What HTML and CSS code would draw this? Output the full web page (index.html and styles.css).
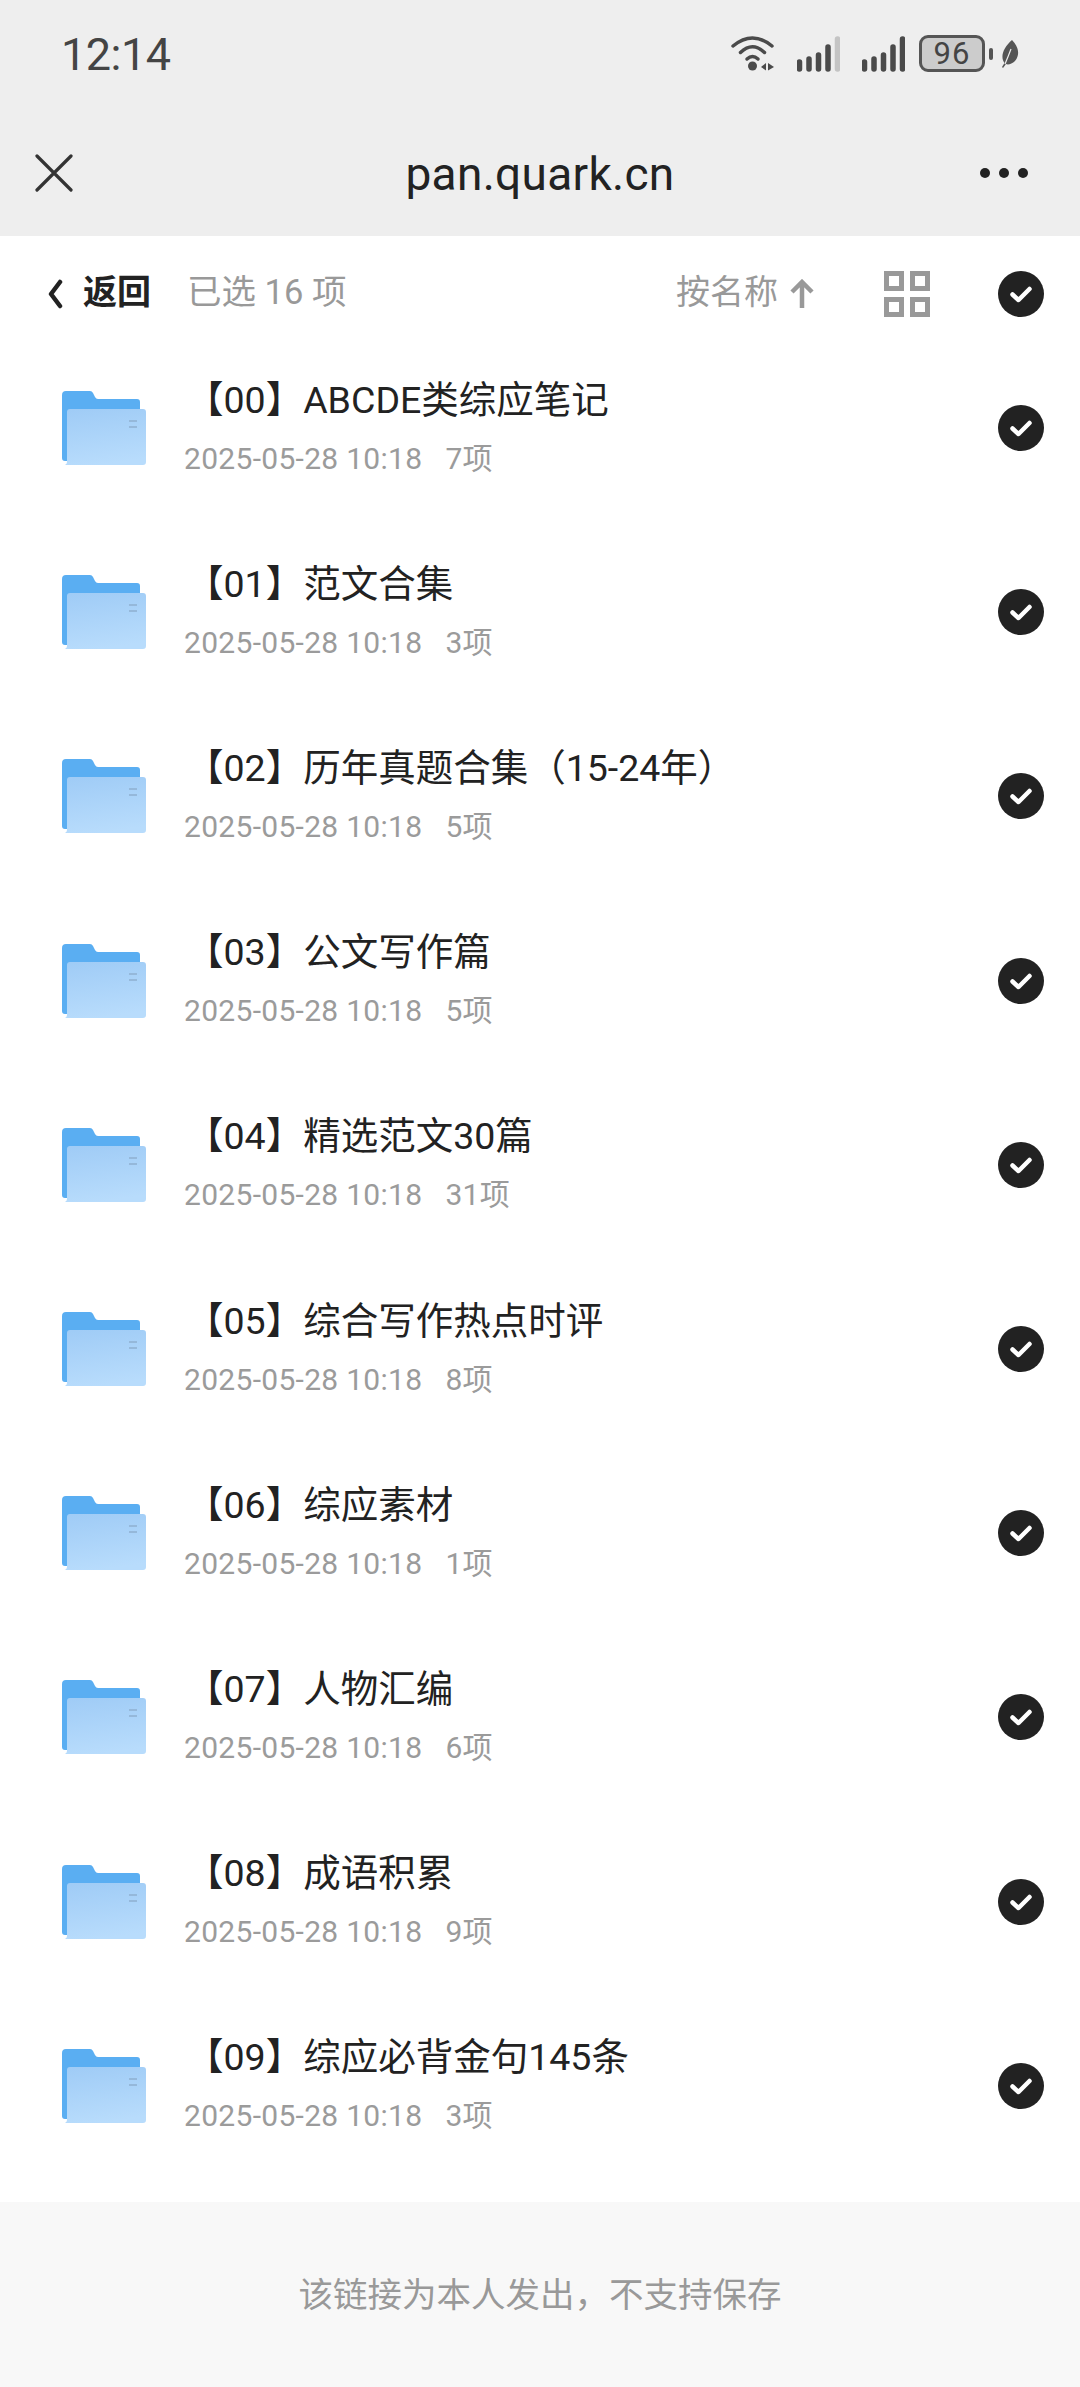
FILE: index.html
```html
<!DOCTYPE html>
<html lang="zh-CN">
<head>
    <meta charset="UTF-8">
    <meta name="viewport" content="width=device-width, initial-scale=1.0">
    <title>pan.quark.cn</title>
    <link rel="stylesheet" href="styles.css">
</head>
<body>
    <svg class="defs" width="0" height="0">
        <defs>
            <linearGradient id="folderfront" x1="0.2" y1="0" x2="0.4" y2="1">
                <stop offset="0" stop-color="#a0ccf6"/>
                <stop offset="1" stop-color="#b8dcfc"/>
            </linearGradient>
        </defs>
        <symbol id="folder" viewBox="0 0 84 74">
            <path d="M0 4q0-4 4-4h24q2 0 3 2l2 4q1 2 3 2h39q3 0 3 3v59H3q-3 0-3-3z" fill="#5aaef2"/>
            <path d="M5 21q0-3 3-3h73q3 0 3 3v50q0 3-3 3H3q2-1 2-3z" fill="url(#folderfront)"/>
            <path d="M67 30h8M67 36h8" stroke="#8fb0d0" stroke-width="1.500"/>
        </symbol>
        <symbol id="check" viewBox="0 0 46 46">
            <circle cx="23" cy="23" r="23" fill="#222"/>
            <path d="M14.500 23.500l6 5.500 11-11" fill="none" stroke="#fff" stroke-width="4.500" stroke-linecap="round" stroke-linejoin="round"/>
        </symbol>
    </svg>

    <div class="top">
        <div class="status">
            <span class="time">12:14</span>
            <div class="status-icons">
                <svg class="wifi" width="44" height="35" viewBox="0 0 44 35">
                    <g fill="none" stroke="#4a4a4a" stroke-width="3.500" stroke-linecap="round">
                        <path d="M2 10Q21.500-6 41 10"/>
                        <path d="M9.500 16.500Q21.500 5 33.500 16.500"/>
                        <path d="M16 23Q21.500 18 27 23"/>
                    </g>
                    <circle cx="21.500" cy="30" r="4.500" fill="#4a4a4a"/>
                    <path d="M30 31l5-4v7.500zM37 27l6 4-6 3.500z" fill="#4a4a4a"/>
                </svg>
                <svg class="signal" width="43" height="36" viewBox="0 0 43 36">
                    <path d="M2.500 26v7M12 23v10M21.500 19v14M31 11v22" fill="none" stroke="#4a4a4a" stroke-width="5.500" stroke-linecap="round"/>
                    <path d="M40.500 3v30" fill="none" stroke="#c4c4c4" stroke-width="5.500" stroke-linecap="round"/>
                </svg>
                <svg class="signal" width="43" height="36" viewBox="0 0 43 36">
                    <path d="M2.500 26v7M12 23v10M21.500 19v14M31 11v22M40.500 3v30" fill="none" stroke="#4a4a4a" stroke-width="5.500" stroke-linecap="round"/>
                </svg>
                <div class="battery"><span class="battery-num">96</span></div>
                <span class="battery-tip"></span>
                <svg class="leaf" width="19" height="28" viewBox="0 0 19 28">
                    <path d="M12 0C19 7 20 15 15 21 12 24 8 25 6 24L3 28 2 27 4.500 23C0 17 3 8 12 0z" fill="#555"/>
                    <path d="M5 24Q8 17 11 9" fill="none" stroke="#eee" stroke-width="1.200"/>
                </svg>
            </div>
        </div>
        <div class="nav">
            <svg class="close" width="38" height="38" viewBox="0 0 38 38"><path d="M2 2l34 34M36 2L2 36" fill="none" stroke="#333" stroke-width="3.200" stroke-linecap="round"/></svg>
            <span class="nav-title">pan.quark.cn</span>
            <div class="dots"><i></i><i></i><i></i></div>
        </div>
    </div>

    <div class="toolbar">
        <svg class="back" width="16" height="30" viewBox="0 0 16 30"><path d="M13 3L4 15l9 12" fill="none" stroke="#222" stroke-width="4.500" stroke-linecap="round" stroke-linejoin="round"/></svg>
        <span class="back-text">返回</span>
        <span class="count">已选 16 项</span>
        <span class="sort">按名称</span>
        <svg class="arrow" width="26" height="30" viewBox="0 0 26 30"><path d="M13 29V4M3 13L13 3l10 10" fill="none" stroke="#999" stroke-width="4.500"/></svg>
        <div class="grid-icon"><i></i><i></i><i></i><i></i></div>
        <svg class="check" width="46" height="46"><use href="#check"/></svg>
    </div>

    <ul class="list">
        <li class="row">
            <svg class="folder" width="84" height="74"><use href="#folder"/></svg>
            <div class="info"><div class="name">【00】ABCDE类综应笔记</div><div class="meta"><span>2025-05-28 10:18</span><span>7项</span></div></div>
            <svg class="check" width="46" height="46"><use href="#check"/></svg>
        </li>
        <li class="row">
            <svg class="folder" width="84" height="74"><use href="#folder"/></svg>
            <div class="info"><div class="name">【01】范文合集</div><div class="meta"><span>2025-05-28 10:18</span><span>3项</span></div></div>
            <svg class="check" width="46" height="46"><use href="#check"/></svg>
        </li>
        <li class="row">
            <svg class="folder" width="84" height="74"><use href="#folder"/></svg>
            <div class="info"><div class="name">【02】历年真题合集（15-24年）</div><div class="meta"><span>2025-05-28 10:18</span><span>5项</span></div></div>
            <svg class="check" width="46" height="46"><use href="#check"/></svg>
        </li>
        <li class="row">
            <svg class="folder" width="84" height="74"><use href="#folder"/></svg>
            <div class="info"><div class="name">【03】公文写作篇</div><div class="meta"><span>2025-05-28 10:18</span><span>5项</span></div></div>
            <svg class="check" width="46" height="46"><use href="#check"/></svg>
        </li>
        <li class="row">
            <svg class="folder" width="84" height="74"><use href="#folder"/></svg>
            <div class="info"><div class="name">【04】精选范文30篇</div><div class="meta"><span>2025-05-28 10:18</span><span>31项</span></div></div>
            <svg class="check" width="46" height="46"><use href="#check"/></svg>
        </li>
        <li class="row">
            <svg class="folder" width="84" height="74"><use href="#folder"/></svg>
            <div class="info"><div class="name">【05】综合写作热点时评</div><div class="meta"><span>2025-05-28 10:18</span><span>8项</span></div></div>
            <svg class="check" width="46" height="46"><use href="#check"/></svg>
        </li>
        <li class="row">
            <svg class="folder" width="84" height="74"><use href="#folder"/></svg>
            <div class="info"><div class="name">【06】综应素材</div><div class="meta"><span>2025-05-28 10:18</span><span>1项</span></div></div>
            <svg class="check" width="46" height="46"><use href="#check"/></svg>
        </li>
        <li class="row">
            <svg class="folder" width="84" height="74"><use href="#folder"/></svg>
            <div class="info"><div class="name">【07】人物汇编</div><div class="meta"><span>2025-05-28 10:18</span><span>6项</span></div></div>
            <svg class="check" width="46" height="46"><use href="#check"/></svg>
        </li>
        <li class="row">
            <svg class="folder" width="84" height="74"><use href="#folder"/></svg>
            <div class="info"><div class="name">【08】成语积累</div><div class="meta"><span>2025-05-28 10:18</span><span>9项</span></div></div>
            <svg class="check" width="46" height="46"><use href="#check"/></svg>
        </li>
        <li class="row">
            <svg class="folder" width="84" height="74"><use href="#folder"/></svg>
            <div class="info"><div class="name">【09】综应必背金句145条</div><div class="meta"><span>2025-05-28 10:18</span><span>3项</span></div></div>
            <svg class="check" width="46" height="46"><use href="#check"/></svg>
        </li>
    </ul>

    <div class="footer">该链接为本人发出，不支持保存</div>
</body>
</html>
```
FILE: styles.css
```css
* {
    box-sizing: border-box;
}
html, body {
    height: 100%;
}
body {
    margin: 0;
    background-color: #fff;
    color: #222;
    font-family: Roboto, "Noto Sans CJK SC", sans-serif;
    display: flex;
    flex-direction: column;
    overflow: hidden;
}
.defs {
    position: absolute;
}

.top {
    height: 236px;
    background-color: #eee;
    flex-shrink: 0;
}
.status {
    height: 112px;
    padding: 24px 61px 0 61px;
    display: flex;
    justify-content: space-between;
    align-items: flex-start;
}
.time {
    font-size: 45px;
    line-height: 62px;
    color: #444;
    letter-spacing: -0.5px;
}
.status-icons {
    display: flex;
    align-items: center;
    padding-top: 11px;
}
.signal {
    margin-left: 22px;
}
.battery {
    width: 66px;
    height: 37px;
    margin-left: 14px;
    border: 3px solid #555;
    border-radius: 9px;
    background-color: #ccc;
    display: flex;
    align-items: center;
    justify-content: center;
}
.battery-num {
    font-size: 31px;
    color: #444;
    line-height: 1;
    letter-spacing: 1px;
}
.battery-tip {
    width: 4px;
    height: 12px;
    margin-left: 4px;
    background-color: #555;
    border-radius: 2px;
}
.leaf {
    margin-left: 7px;
}
.nav {
    height: 124px;
    padding: 0 35px;
    display: grid;
    grid-template-columns: 1fr auto 1fr;
    align-items: center;
}
.close {
    margin-bottom: 2px;
}
.nav-title {
    font-size: 46px;
    letter-spacing: 0.3px;
    color: #222;
}
.dots {
    justify-self: end;
    margin: 0 17px 3px 0;
    display: flex;
    gap: 9px;
}
.dots i {
    width: 10px;
    height: 10px;
    border-radius: 50%;
    background-color: #222;
}

.toolbar {
    height: 100px;
    padding: 16px 36px 0 47px;
    display: flex;
    align-items: center;
    flex-shrink: 0;
}
.back-text {
    margin: 0 0 10px 20px;
    font-size: 34px;
    font-weight: 700;
}
.count {
    margin: 0 0 10px 36px;
    font-size: 34.5px;
    color: #999;
}
.sort {
    margin: 0 0 10px auto;
    font-size: 34px;
    color: #999;
}
.arrow {
    margin-left: 11px;
}
.grid-icon {
    margin-left: 69px;
    width: 46px;
    height: 46px;
    display: grid;
    grid-template-columns: 20px 20px;
    gap: 6px;
}
.grid-icon i {
    border: 5px solid #999;
}
.toolbar .check {
    margin-left: 68px;
}

.list {
    list-style: none;
    margin: 0;
    padding: 0;
    flex: 1;
}
.row {
    height: 184.2px;
    padding: 0 36px 0 62px;
    display: flex;
    align-items: center;
}
.folder {
    flex-shrink: 0;
}
.info {
    flex: 1;
    margin-left: 38px;
    padding-bottom: 5px;
}
.name {
    margin-left: 2px;
    font-size: 37.5px;
    line-height: 50px;
}
.meta {
    margin-top: 16px;
    font-size: 30px;
    line-height: 36px;
    letter-spacing: 0.3px;
    color: #9b9b9b;
    display: flex;
    gap: 23px;
}

.footer {
    height: 185px;
    padding-bottom: 6px;
    background-color: #f8f8f8;
    color: #999;
    font-size: 34.5px;
    display: flex;
    align-items: center;
    justify-content: center;
    flex-shrink: 0;
}
```
